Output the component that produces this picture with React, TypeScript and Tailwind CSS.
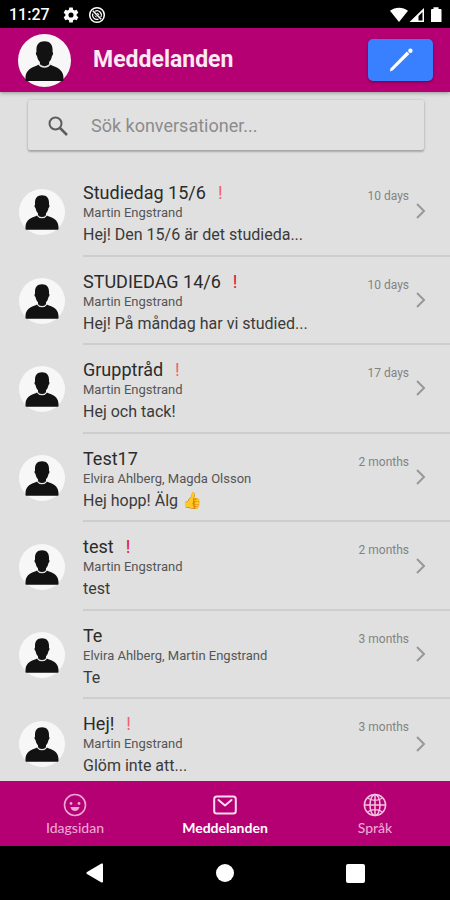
import React, { useState } from "react";

type Conversation = {
  id: number;
  title: string;
  people: string;
  preview: string;
  age: string;
  important?: "strong" | "soft";
};

const conversations: Conversation[] = [
  { id: 1, title: "Studiedag 15/6", people: "Martin Engstrand", preview: "Hej! Den 15/6 är det studieda...", age: "10 days", important: "soft" },
  { id: 2, title: "STUDIEDAG 14/6", people: "Martin Engstrand", preview: "Hej! På måndag har vi studied...", age: "10 days", important: "strong" },
  { id: 3, title: "Grupptråd", people: "Martin Engstrand", preview: "Hej och tack!", age: "17 days", important: "soft" },
  { id: 4, title: "Test17", people: "Elvira Ahlberg, Magda Olsson", preview: "Hej hopp! Älg 👍", age: "2 months" },
  { id: 5, title: "test", people: "Martin Engstrand", preview: "test", age: "2 months", important: "strong" },
  { id: 6, title: "Te", people: "Elvira Ahlberg, Martin Engstrand", preview: "Te", age: "3 months" },
  { id: 7, title: "Hej!", people: "Martin Engstrand", preview: "Glöm inte att...", age: "3 months", important: "soft" },
];

// Round avatar with the default person silhouette
function Avatar({ className }: { className: string }) {
  return (
    <svg viewBox="0 0 46 46" className={`shrink-0 ${className}`} aria-hidden="true">
      <circle cx="23" cy="23" r="23" fill="#f7f7f7" />
      <path
        d="M6.500 40v-1.800c0-5.500 3.200-8.700 9.500-10.700l2.500-1.200h9l2.500 1.200c6.300 2 9.500 5.200 9.500 10.700V40c0 .5-.3.800-.8.800H7.300c-.5 0-.8-.3-.8-.8z"
        fill="#121212"
      />
      <path d="M17.800 25.800c1.500 2 3 2.800 5.200 2.800s3.700-.8 5.200-2.800" fill="none" stroke="#e4e4e4" strokeWidth="1.200" />
      <path
        d="M23 6.200c-4.600 0-7 2.800-7 7.200v2.300c-.8.300-.6 2.600.5 3.400.4 2.200 1.200 3.900 2.500 5.200v1.500c1.100 1.200 2.400 1.700 4 1.700s2.900-.5 4-1.700v-1.500c1.300-1.300 2.100-3 2.500-5.200 1.100-.8 1.300-3.100.5-3.400v-2.300c0-4.400-2.400-7.200-7-7.200z"
        fill="#121212"
      />
    </svg>
  );
}

function StatusBar() {
  return (
    <div className="flex h-7 shrink-0 items-center bg-black pt-0.5 pr-2 pl-[9px] text-white">
      <span className="text-base font-medium">11:27</span>
      <svg viewBox="0 0 24 24" className="ml-3 size-4.5" fill="currentColor" aria-hidden="true">
        <path
          fillRule="evenodd"
          d="M9.700 2h4.600l.5 2.900 1.900 1.100 2.800-1 2.300 4-2.300 1.900v2.200l2.300 1.900-2.300 4-2.800-1-1.900 1.100-.5 2.900H9.700l-.5-2.900L7.300 18l-2.800 1-2.300-4 2.300-1.900v-2.200L2.200 9l2.300-4 2.800 1 1.900-1.100zM12 15.400a3.400 3.400 0 1 0 0-6.800 3.400 3.400 0 0 0 0 6.800z"
        />
      </svg>
      <svg viewBox="0 0 18 18" className="ml-2 size-4.5" fill="none" stroke="currentColor" aria-hidden="true">
        <circle cx="9" cy="9" r="7.300" strokeWidth="1.500" />
        <path d="M4.800 4.800l8.400 8.400" strokeWidth="1.600" />
        <path d="M7 5.200a4.300 4.300 0 0 1 5.800 5.800M4.900 7.500a4.300 4.300 0 0 0 5.600 5.600" strokeWidth="1.200" />
        <path d="M9 7.200a2 2 0 0 1 1.900 2M7 9.500a2 2 0 0 0 1.700 1.500" strokeWidth="1" />
      </svg>
      <svg viewBox="0 0 52 16" className="ml-auto h-4 w-13" fill="currentColor" aria-hidden="true">
        <path d="M0 3.800C5.200-.4 12.800-.4 18 3.800L9 15z" />
        <path fillRule="evenodd" d="M34 1v14H19.500zM32.500 5v8.500h-4V9z" />
        <path d="M43.500 2V.3h5V2h1.800c.7 0 1.200.5 1.200 1.200V15H41V3.200c0-.7.500-1.200 1.200-1.200z" />
      </svg>
    </div>
  );
}

function Header() {
  return (
    <header className="z-10 flex h-16 shrink-0 items-center bg-[#b50073] pr-[17px] pl-4.5 shadow-[0_1px_4px_rgba(0,0,0,0.35)]">
      <Avatar className="size-[53px]" />
      <h1 className="ml-[22px] text-[23px] font-bold text-[#fbe9f4]">Meddelanden</h1>
      <button
        type="button"
        aria-label="Nytt meddelande"
        className="ml-auto flex h-[42px] w-[65px] items-center justify-center rounded-[5px] bg-[#3880ff] shadow-[0_1px_3px_rgba(0,0,0,0.4)]"
      >
        <svg viewBox="0 0 24 24" className="size-6" fill="white" aria-hidden="true">
          <path d="M17.900 3.500 20.400 6 3.600 22.500l-2.800 1 .9-3.200z" />
          <circle cx="21.400" cy="2.700" r="2.200" />
        </svg>
      </button>
    </header>
  );
}

function SearchBox() {
  const [query, setQuery] = useState("");

  return (
    <label className="mx-7 mt-2 mr-[26px] flex h-[50px] shrink-0 items-center rounded-xs bg-[#e1e1e1] pt-0.5 pl-5 shadow-[0_2px_2px_rgba(0,0,0,0.22),0_0_3px_rgba(0,0,0,0.16)]">
      <svg viewBox="0 0 20 20" className="size-5 shrink-0" fill="none" stroke="#5c5c5c" aria-hidden="true">
        <circle cx="7.500" cy="7.500" r="6" strokeWidth="2" />
        <path d="m12 12 7 7" strokeWidth="2.500" />
      </svg>
      <input
        type="text"
        aria-label="Sök konversationer"
        placeholder="Sök konversationer..."
        value={query}
        onChange={(e) => setQuery(e.target.value)}
        className="ml-[23px] w-full min-w-0 bg-transparent text-lg text-[#444] outline-none placeholder:text-[#8c8c8c]"
      />
    </label>
  );
}

function ConversationRow({ item, last }: { item: Conversation; last: boolean }) {
  return (
    <li className="flex">
      <a href={`#conversation-${item.id}`} className="flex min-w-0 flex-1 items-center pl-[19px]">
        <Avatar className="size-[46px]" />
        <div
          className={`ml-[18px] flex min-w-0 flex-1 items-center self-stretch pr-[23px] ${
            last ? "" : "border-b-2 border-[#cdcdcd]"
          }`}
        >
          <div className="min-w-0 flex-1 self-start pt-[13px]">
            <h2 className="text-lg leading-6 text-[#2b2b2b]">
              {item.title}
              {item.important && (
                <span className={`ml-3 ${item.important === "strong" ? "text-[#dc143c]" : "text-[#f0616d]"}`}>!</span>
              )}
            </h2>
            <p className="truncate text-[13px] leading-4 text-[#555]">{item.people}</p>
            <p className="truncate text-base leading-7 text-[#3a3a3a]">{item.preview}</p>
          </div>
          <span className="mr-1.5 self-start pt-5 text-xs leading-4 text-[#838383]">{item.age}</span>
          <svg viewBox="0 0 12 16" className="h-4 w-3 shrink-0" fill="none" stroke="#989898" strokeWidth="2" aria-hidden="true">
            <path d="m2 1 7 7-7 7" />
          </svg>
        </div>
      </a>
    </li>
  );
}

function TabBar() {
  const tab = "flex flex-1 flex-col items-center pt-3 text-sm leading-[22px]";

  return (
    <nav className="flex h-[65px] shrink-0 bg-[#b50073] font-[Lato,sans-serif]">
      <a href="#idagsidan" className={`${tab} font-medium text-[#eba6d2]`}>
        <svg viewBox="0 0 24 24" className="size-6" fill="none" stroke="currentColor" aria-hidden="true">
          <circle cx="12" cy="12" r="10.500" strokeWidth="1.600" />
          <circle cx="8" cy="10.500" r="1.400" fill="currentColor" stroke="none" />
          <circle cx="16" cy="10.500" r="1.400" fill="currentColor" stroke="none" />
          <path d="M7.500 14h9c-.5 2.500-2.300 4-4.500 4s-4-1.500-4.500-4z" fill="currentColor" stroke="none" />
        </svg>
        Idagsidan
      </a>
      <a href="#meddelanden" aria-current="page" className={`${tab} font-bold text-white`}>
        <svg viewBox="0 0 24 24" className="size-6" fill="none" stroke="#f9dcee" strokeWidth="2" aria-hidden="true">
          <rect x="1.200" y="3.400" width="21.600" height="17.200" rx="2.500" />
          <path d="m5.500 7 6.500 5.500L18.500 7" strokeLinecap="round" strokeLinejoin="round" />
        </svg>
        Meddelanden
      </a>
      <a href="#sprak" className={`${tab} font-medium text-[#eba6d2]`}>
        <svg viewBox="0 0 24 24" className="size-6" fill="none" stroke="#f3c4e1" strokeWidth="1.500" aria-hidden="true">
          <circle cx="12" cy="12" r="10.600" />
          <ellipse cx="12" cy="12" rx="5" ry="10.600" />
          <path d="M12 1.400v21.200M1.400 12h21.200M4.500 5c4.500 3 10.500 3 15 0M4.500 19c4.500-3 10.500-3 15 0" />
        </svg>
        Språk
      </a>
    </nav>
  );
}

function SystemBar() {
  const key = "flex flex-1 items-center justify-center";

  return (
    <div className="flex h-[54px] shrink-0 bg-black px-[30px]">
      <button type="button" aria-label="Back" className={key}>
        <svg viewBox="0 0 20 20" className="size-5" fill="white" aria-hidden="true">
          <path d="M18 1.500v17a1 1 0 0 1-1.500.9L2 11a1.200 1.200 0 0 1 0-2L16.500.6A1 1 0 0 1 18 1.500z" />
        </svg>
      </button>
      <button type="button" aria-label="Home" className={key}>
        <span className="size-[18px] rounded-full bg-white" />
      </button>
      <button type="button" aria-label="Recent apps" className={key}>
        <span className="size-[19px] rounded-xs bg-white" />
      </button>
    </div>
  );
}

export default function App() {
  return (
    <div className="flex h-screen flex-col bg-[#e0e0e0] font-[Roboto,sans-serif]">
      <StatusBar />
      <Header />
      <main className="flex min-h-0 flex-1 flex-col">
        <SearchBox />
        <div className="mt-[18px] min-h-0 flex-1 overflow-y-auto [scrollbar-width:none]">
          <ul className="grid min-h-[620px] auto-rows-fr">
            {conversations.map((item, i) => (
              <ConversationRow key={item.id} item={item} last={i === conversations.length - 1} />
            ))}
          </ul>
        </div>
      </main>
      <TabBar />
      <SystemBar />
    </div>
  );
}
